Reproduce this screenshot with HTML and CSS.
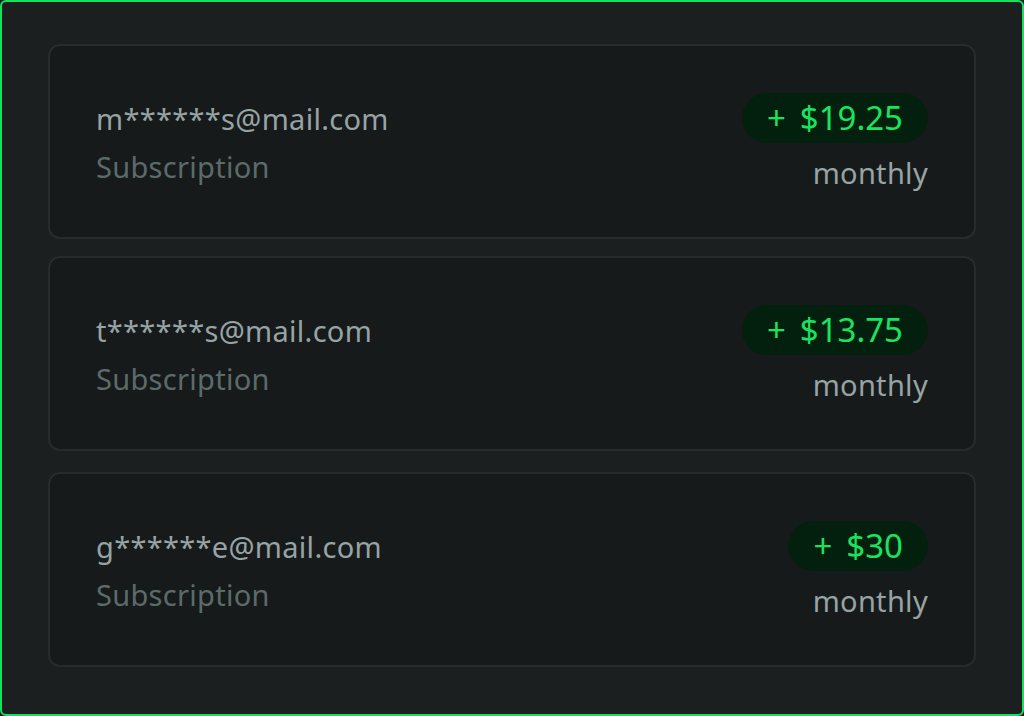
FILE: index.html
```html
<!DOCTYPE html>
<html lang="en">
<head>
    <meta charset="UTF-8">
    <meta name="viewport" content="width=device-width, initial-scale=1.0">
    <title>Payments</title>
    <link rel="stylesheet" href="styles.css">
</head>
<body>
    <div class="frame">
        <div class="payment">
            <div class="who">
                <div class="email">m******s@mail.com</div>
                <div class="kind">Subscription</div>
            </div>
            <div class="amount">
                <div class="badge"><span>+</span><span>$19.25</span></div>
                <div class="period">monthly</div>
            </div>
        </div>
        <div class="payment">
            <div class="who">
                <div class="email">t******s@mail.com</div>
                <div class="kind">Subscription</div>
            </div>
            <div class="amount">
                <div class="badge"><span>+</span><span>$13.75</span></div>
                <div class="period">monthly</div>
            </div>
        </div>
        <div class="payment last">
            <div class="who">
                <div class="email">g******e@mail.com</div>
                <div class="kind">Subscription</div>
            </div>
            <div class="amount">
                <div class="badge"><span>+</span><span>$30</span></div>
                <div class="period">monthly</div>
            </div>
        </div>
    </div>
</body>
</html>
```
FILE: styles.css
```css
body {
    margin: 0;
    padding: 0;
    background: #1b1f20;
    font-family: 'Noto Sans', 'Open Sans', sans-serif;
}
.frame {
    box-sizing: border-box;
    width: 1024px;
    height: 716px;
    border: 2px solid #12e35c;
    border-radius: 6px;
    background: #1b1f20;
    padding: 42px 46px;
    display: flex;
    flex-direction: column;
    gap: 17px;
}
.payment {
    box-sizing: border-box;
    height: 195px;
    background: #161a1b;
    border: 2px solid #262c2d;
    border-radius: 12px;
    padding: 0 46px;
    display: flex;
    justify-content: space-between;
    align-items: center;
}
.payment.last {
    margin-top: 4px;
}
.who {
    display: flex;
    flex-direction: column;
    gap: 12px;
    margin-top: 3px;
}
.email,
.kind,
.period {
    font-size: 29px;
    line-height: 36px;
    letter-spacing: 0.3px;
}
.email {
    color: #97a3a4;
}
.kind {
    color: #5c6a6a;
}
.amount {
    display: flex;
    flex-direction: column;
    align-items: flex-end;
    gap: 12px;
}
.badge {
    height: 50px;
    padding: 0 25px;
    border-radius: 25px;
    background: #03200f;
    color: #19e35f;
    font-size: 33px;
    display: flex;
    align-items: center;
    gap: 14px;
}
.period {
    color: #97a3a4;
}
```
